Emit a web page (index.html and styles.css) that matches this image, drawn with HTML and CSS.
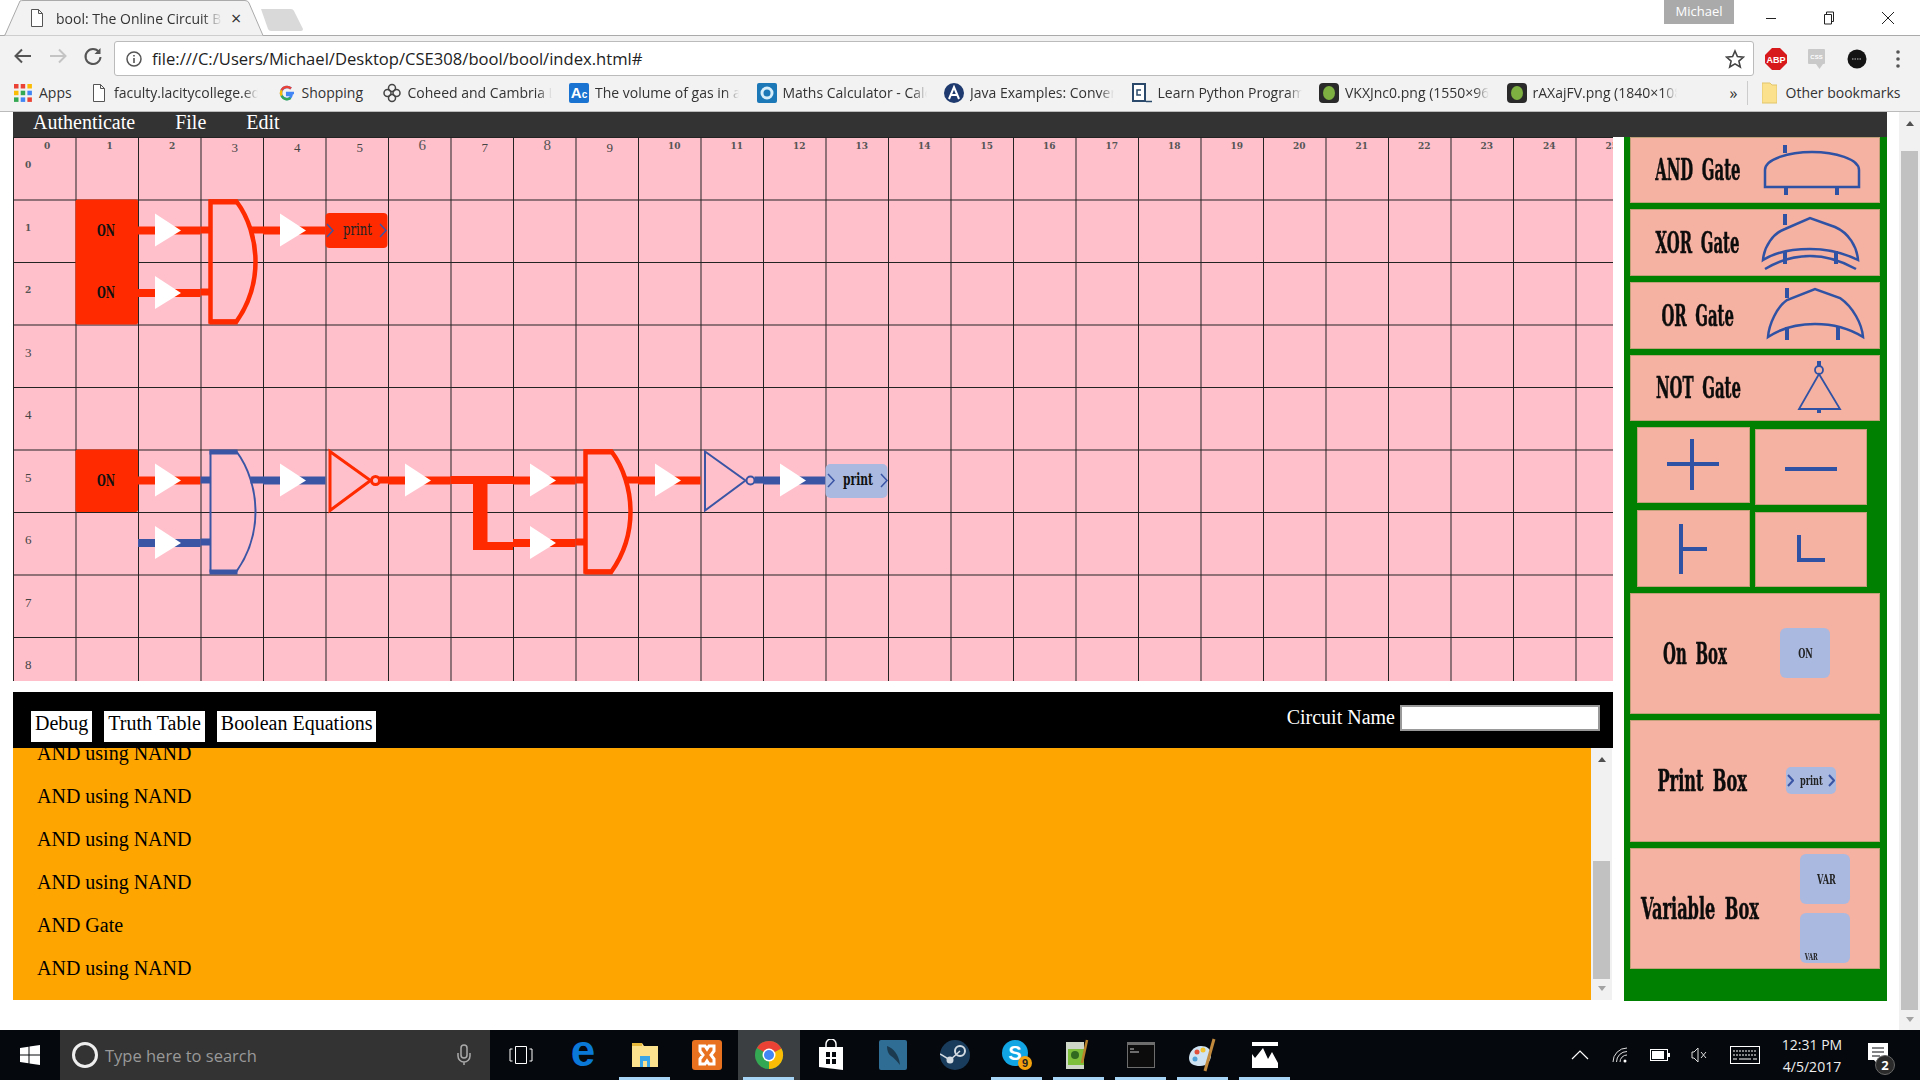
FILE: index.html
```html
<!DOCTYPE html>
<html lang="en">
<head>
<meta charset="utf-8">
<title>bool: The Online Circuit Builder</title>
<link rel="stylesheet" href="styles.css">
</head>
<body>
<header class="chrome">
  <div class="tabstrip">
    <div class="tab">
      <svg class="tab-shape" width="262" height="36" viewBox="0 0 262 36"><path d="M0,35.5 L1,35 L16,1 Q17,0.5 20,0.5 H241 Q244,0.5 245,3 L259,35.5" fill="#f2f2f2" stroke="#aaa"/></svg>
      <svg class="tab-doc" width="12" height="18" viewBox="0 0 12 18"><path d="M0.5,0.5 H7.5 L11.5,4.5 V17.5 H0.5 Z M7.5,0.5 V4.5 H11.5" fill="#fff" stroke="#555"/></svg>
      <span class="tab-title">bool: The Online Circuit Builder</span>
      <span class="tab-close">×</span>
    </div>
    <svg class="newtab" width="44" height="22" viewBox="0 0 44 22"><path d="M1,0 H31 Q33,0 34,2 L43,20 Q43,22 41,22 H11 Q9,22 8,20 Z" fill="#d9d9d9"/></svg>
    <div class="profile">Michael</div>
    <div class="winctl">
      <svg width="12" height="12" viewBox="0 0 12 12"><path d="M1,6.5 H11" stroke="#222" fill="none"/></svg>
      <svg width="12" height="14" viewBox="0 0 12 14"><path d="M1.5,3.5 H8.5 V13 H1.5 Z M3.5,3.5 V1 H10.5 V10.5 H8.5" stroke="#222" fill="none"/></svg>
      <svg width="14" height="14" viewBox="0 0 14 14"><path d="M1,1 L13,13 M13,1 L1,13" stroke="#222" fill="none"/></svg>
    </div>
  </div>
  <div class="toolbar">
    <svg class="nav" width="20" height="20" viewBox="0 0 20 20"><path d="M18,10 H3 M9,3.5 L2.5,10 L9,16.5" stroke="#555" stroke-width="2" fill="none"/></svg>
    <svg class="nav" width="20" height="20" viewBox="0 0 20 20"><path d="M2,10 H17 M11,3.5 L17.5,10 L11,16.5" stroke="#c4c4c4" stroke-width="2" fill="none"/></svg>
    <svg class="nav" width="20" height="20" viewBox="0 0 20 20"><path d="M16,6 A7.5,7.5 0 1 0 17.5,11" stroke="#555" stroke-width="2" fill="none"/><path d="M17.5,2 V8 H11.5 Z" fill="#555"/></svg>
    <div class="omnibox">
      <svg width="16" height="16" viewBox="0 0 16 16"><circle cx="8" cy="8" r="7" fill="none" stroke="#555" stroke-width="1.5"/><path d="M8,7 V12 M8,4 V5.6" stroke="#555" stroke-width="1.6"/></svg>
      <span class="url">file:///C:/Users/Michael/Desktop/CSE308/bool/bool/index.html#</span>
      <svg class="star" width="20" height="20" viewBox="0 0 20 20"><path d="M10,2 L12.4,7.6 L18.5,8.1 L13.9,12.1 L15.3,18 L10,14.9 L4.7,18 L6.1,12.1 L1.5,8.1 L7.6,7.6 Z" fill="none" stroke="#444" stroke-width="1.6"/></svg>
    </div>
    <div class="exts">
      <svg width="22" height="22" viewBox="0 0 22 22"><polygon points="7,0 15,0 22,7 22,15 15,22 7,22 0,15 0,7" fill="#d8191c"/><text x="11" y="14.5" class="abp">ABP</text></svg>
      <svg width="20" height="22" viewBox="0 0 20 22"><rect x="1" y="1" width="17" height="15" rx="1" fill="#c9c9c9"/><path d="M9,16 H16 L12.500,21 Z" fill="#c9c9c9"/><text x="9.500" y="11" class="cssx">CSS</text></svg>
      <svg width="20" height="20" viewBox="0 0 20 20"><circle cx="10" cy="10" r="9.500" fill="#141414"/><path d="M5,10 H15" stroke="#888" stroke-width="1.500" stroke-dasharray="1.500 1"/></svg>
      <svg class="dots" width="4" height="18" viewBox="0 0 4 18"><circle cx="2" cy="2" r="1.800" fill="#555"/><circle cx="2" cy="9" r="1.800" fill="#555"/><circle cx="2" cy="16" r="1.800" fill="#555"/></svg>
    </div>
  </div>
  <nav class="bookmarks">
    <a class="bm bm-apps"><svg width="18" height="18" viewBox="0 0 18 18"><rect width="4.500" height="4.500" fill="#ea4335"/><rect x="6.700" width="4.500" height="4.500" fill="#ea4335"/><rect x="13.400" width="4.500" height="4.500" fill="#fbbc05"/><rect y="6.700" width="4.500" height="4.500" fill="#fbbc05"/><rect x="6.700" y="6.700" width="4.500" height="4.500" fill="#34a853"/><rect x="13.400" y="6.700" width="4.500" height="4.500" fill="#4285f4"/><rect y="13.400" width="4.500" height="4.500" fill="#34a853"/><rect x="6.700" y="13.400" width="4.500" height="4.500" fill="#4285f4"/><rect x="13.400" y="13.400" width="4.500" height="4.500" fill="#ea4335"/></svg><span>Apps</span></a>
    <a class="bm"><svg class="w18" width="18" height="18" viewBox="0 0 12 18"><path d="M0.500,0.500 H7.500 L11.500,4.500 V17.500 H0.500 Z M7.500,0.500 V4.500 H11.500" fill="#fff" stroke="#555"/></svg><span class="fade">faculty.lacitycollege.edu</span></a>
    <a class="bm bm-short"><svg width="18" height="18" viewBox="0 0 18 18"><path d="M16,9 H9.200 V11 H13.500 C13,13.500 11.300,15 9,15 A6,6 0 1 1 13,4.500" fill="none" stroke="#4285f4" stroke-width="2.500"/><path d="M13,4.500 A6,6 0 0 0 3.600,6.300" fill="none" stroke="#ea4335" stroke-width="2.500"/><path d="M3.600,6.300 A6,6 0 0 0 3.600,11.700" fill="none" stroke="#fbbc05" stroke-width="2.500"/><path d="M3.600,11.700 A6,6 0 0 0 12.500,14" fill="none" stroke="#34a853" stroke-width="2.500"/></svg><span>Shopping</span></a>
    <a class="bm"><svg width="20" height="20" viewBox="0 0 18 20"><g fill="none" stroke="#444" stroke-width="1.500"><circle cx="9" cy="5" r="3.500"/><circle cx="4.500" cy="10" r="3.500"/><circle cx="13.500" cy="10" r="3.500"/><circle cx="9" cy="15" r="3.500"/></g></svg><span class="fade">Coheed and Cambria Lyrics</span></a>
    <a class="bm"><span class="fav fav-ac">A<small>c</small></span><span class="fade">The volume of gas in a container</span></a>
    <a class="bm"><svg width="20" height="20" viewBox="0 0 20 20"><rect width="20" height="20" rx="2" fill="#1d78b8"/><circle cx="10" cy="10" r="6.500" fill="#d6eef9"/><circle cx="10" cy="10" r="3.500" fill="#1d78b8"/></svg><span class="fade">Maths Calculator - Calculate</span></a>
    <a class="bm"><svg width="20" height="20" viewBox="0 0 20 20"><circle cx="10" cy="10" r="10" fill="#1e3a6e"/><path d="M5,16 L10,4 L15,16 M7,12 H13" stroke="#fff" stroke-width="2" fill="none"/></svg><span class="fade">Java Examples: Conversions</span></a>
    <a class="bm"><svg width="20" height="20" viewBox="0 0 20 20"><rect x="1" y="1" width="12" height="17" fill="#fff" stroke="#2b4a6b" stroke-width="2"/><path d="M9,7 H5 V12 H9" stroke="#2b4a6b" stroke-width="1.500" fill="none"/><path d="M14,18.500 H20" stroke="#2b4a6b" stroke-width="1.500"/></svg><span class="fade">Learn Python Programming</span></a>
    <a class="bm"><svg width="20" height="20" viewBox="0 0 20 20"><rect width="20" height="20" rx="4" fill="#2a2a2a"/><ellipse cx="10" cy="10" rx="6" ry="7" fill="#7db040"/></svg><span class="fade">VKXJnc0.png (1550×960)</span></a>
    <a class="bm bm-last"><svg width="20" height="20" viewBox="0 0 20 20"><rect width="20" height="20" rx="4" fill="#2a2a2a"/><ellipse cx="10" cy="10" rx="6" ry="7" fill="#7db040"/></svg><span class="fade">rAXajFV.png (1840×1080)</span></a>
    <span class="bm-more">»</span>
    <a class="bm-other"><svg width="15" height="22" viewBox="0 0 15 22"><path d="M0,1 H8 L10,3 H15 V21 H0 Z" fill="#fbe08e" stroke="#e3c56a"/></svg><span>Other bookmarks</span></a>
  </nav>
</header>

<main class="page">
  <div class="content">
    <div class="menu">
      <a>Authenticate</a><a>File</a><a>Edit</a>
    </div>
    <div class="main">
      <section class="left">
        <div class="board">
          <span class="cl">0</span><span class="cl">1</span><span class="cl">2</span><span class="cl lg">3</span><span class="cl lg">4</span><span class="cl lg">5</span><span class="cl huge">6</span><span class="cl lg">7</span><span class="cl huge">8</span><span class="cl lg">9</span><span class="cl">10</span><span class="cl">11</span><span class="cl">12</span><span class="cl">13</span><span class="cl">14</span><span class="cl">15</span><span class="cl">16</span><span class="cl">17</span><span class="cl">18</span><span class="cl">19</span><span class="cl">20</span><span class="cl">21</span><span class="cl">22</span><span class="cl">23</span><span class="cl">24</span><span class="cl">25</span>
          <span class="rl rl-first">0</span><span class="rl">1</span><span class="rl">2</span><span class="rl lg">3</span><span class="rl lg">4</span><span class="rl lg">5</span><span class="rl lg">6</span><span class="rl lg">7</span><span class="rl lg">8</span>
          <svg class="circuit" width="1600" height="544" viewBox="0 0 1600 544">
            <defs>
              <g id="arrow"><rect x="0" y="27" width="62.500" height="8" fill="currentColor"/><polygon points="17,14 43,31 17,47" fill="#fff"/></g>
              <g id="gate"><path d="M10,2 H36 C48,18 55,40 55,62 C55,85 48,105 36,122 H10 Z" fill="none" stroke="currentColor"/><rect x="9" y="0" width="28" height="5" fill="currentColor"/><rect x="9" y="120" width="28" height="5" fill="currentColor"/><rect x="0" y="27" width="10" height="7" fill="currentColor"/><rect x="0" y="89" width="10" height="7" fill="currentColor"/><rect x="50" y="27" width="13" height="7" fill="currentColor"/></g>
              <g id="not"><polygon points="4.500,2 45,31 4.500,61" fill="none" stroke="currentColor"/><circle cx="50" cy="31" r="4" fill="none" stroke="currentColor"/><rect x="54" y="27" width="9" height="7" fill="currentColor"/></g>
              <path id="chev" d="M0,0 L6,6.500 L0,13" fill="none" stroke="#3b55a5" stroke-width="1.500"/>
            </defs>
            <g class="red">
              <rect class="on" x="62.500" y="62.500" width="62.500" height="125" rx="2"/>
              <use href="#arrow" x="125" y="62.500"/>
              <use href="#arrow" x="125" y="125"/>
              <use href="#gate" class="thick" x="187.500" y="62.500"/>
              <use href="#arrow" x="250" y="62.500"/>
              <rect class="on" x="312.500" y="76" width="62" height="35" rx="4"/>
              <rect class="on" x="62.500" y="312.500" width="62.500" height="62.500" rx="2"/>
              <use href="#arrow" x="125" y="312.500"/>
              <use href="#not" class="mid" x="312.500" y="312.500"/>
              <use href="#arrow" x="375" y="312.500"/>
              <path d="M437.500,343 H500 M464,343 V409 H500" fill="none" stroke="currentColor" stroke-width="8"/>
              <path d="M469,343 V408" fill="none" stroke="currentColor" stroke-width="11"/>
              <use href="#arrow" x="500" y="312.500"/>
              <use href="#arrow" x="500" y="375"/>
              <use href="#gate" class="thick" x="562.500" y="312.500"/>
              <use href="#arrow" x="625" y="312.500"/>
            </g>
            <g class="blue">
              <use href="#arrow" x="125" y="375"/>
              <use href="#gate" class="thin" x="187.500" y="312.500"/>
              <use href="#arrow" x="250" y="312.500"/>
              <use href="#not" class="thin" x="687.500" y="312.500"/>
              <use href="#arrow" x="750" y="312.500"/>
              <rect class="vbox" x="812.500" y="327" width="62" height="34" rx="5"/>
            </g>
            <use href="#chev" x="314" y="87"/>
            <use href="#chev" x="367" y="87"/>
            <text class="cell-text" x="330" y="98" textLength="29" lengthAdjust="spacingAndGlyphs">print</text>
            <text class="cell-text on-text" x="84" y="99" textLength="18" lengthAdjust="spacingAndGlyphs">ON</text>
            <text class="cell-text on-text" x="84" y="161" textLength="18" lengthAdjust="spacingAndGlyphs">ON</text>
            <text class="cell-text on-text" x="84" y="349" textLength="18" lengthAdjust="spacingAndGlyphs">ON</text>
            <use href="#chev" x="815" y="337"/>
            <use href="#chev" x="868" y="337"/>
            <text class="cell-text strong" x="830" y="348" textLength="30" lengthAdjust="spacingAndGlyphs">print</text>
          </svg>
        </div>
        <div class="bar">
          <button class="bar-tab">Debug</button>
          <button class="bar-tab">Truth Table</button>
          <button class="bar-tab">Boolean Equations</button>
          <label class="name-field">Circuit Name <input type="text" class="name-input"></label>
        </div>
        <div class="debug">
          <div class="debug-log">
            <div class="log-lines">
              <p>AND using NAND</p>
              <p>AND using NAND</p>
              <p>AND using NAND</p>
              <p>AND using NAND</p>
              <p>AND Gate</p>
              <p>AND using NAND</p>
            </div>
          </div>
          <div class="inner-scroll">
            <span class="arrow-up"></span>
            <span class="inner-thumb"></span>
            <span class="arrow-down"></span>
          </div>
        </div>
      </section>

      <aside class="palette">
        <div class="card h66">
          <span class="lbl"><b>AND Gate</b></span>
          <svg class="ico" width="114" height="66" viewBox="0 0 114 66"><path class="ln" d="M0,50 H94 V33 C94,22 70,15 47,15 C24,15 0,22 0,33 Z"/><path class="st" d="M20,8 V16 M21,50 V58 M72,50 V58"/></svg>
        </div>
        <div class="card h67">
          <span class="lbl"><b>XOR Gate</b></span>
          <svg class="ico" width="114" height="67" viewBox="0 0 114 67"><path class="ln" d="M-2,51 C-1,38 8,24 20,20 L45,9 L70,18 C84,24 92,38 93,51 C75,42 60,40 45,40 C30,40 12,42 -2,51 Z"/><path class="ln" d="M0,60 C15,51 30,47 45,47 C60,47 75,51 91,60"/><path class="st" d="M20,5 V16 M20,42 V55 M71,42 V55"/></svg>
        </div>
        <div class="card h67">
          <span class="lbl"><b>OR Gate</b></span>
          <svg class="ico" width="114" height="67" viewBox="0 0 114 67"><path class="ln" d="M3,55 C4,42 12,25 22,18 L50,7 L75,16 C88,25 97,42 98,55 C82,45 65,42 50,42 C35,42 18,45 3,55 Z"/><path class="st" d="M22,6 V16 M22,45 V58 M73,45 V58"/></svg>
        </div>
        <div class="card h66">
          <span class="lbl"><b>NOT Gate</b></span>
          <svg class="ico" width="114" height="66" viewBox="0 0 114 66"><path class="ln fine" d="M54,19 L75,54 H34 Z"/><circle class="ln fine" cx="54" cy="15" r="4"/><path class="st" d="M54,6 V11 M54,54 V58"/></svg>
        </div>
        <div class="wires">
          <div class="wire-col">
            <div class="wire h76"><svg width="60" height="60" viewBox="0 0 60 60"><path class="st" d="M4,29 H56 M29,4 V55"/></svg></div>
            <div class="wire h77"><svg width="60" height="60" viewBox="0 0 60 60"><path class="st" d="M18,5 V55 M18,30 H44"/></svg></div>
          </div>
          <div class="wire-col shifted">
            <div class="wire h76"><svg width="60" height="60" viewBox="0 0 60 60"><path class="st" d="M4,32 H56"/></svg></div>
            <div class="wire h75"><svg width="60" height="60" viewBox="0 0 60 60"><path class="st" d="M18,15 V40 H44"/></svg></div>
          </div>
        </div>
        <div class="card tall">
          <span class="lbl lbl-on"><b>On Box</b></span>
          <span class="chip chip-on"><span class="chip-t">ON</span></span>
        </div>
        <div class="card tall taller">
          <span class="lbl lbl-print"><b class="wide">Print Box</b></span>
          <span class="chip-print">
            <svg width="7" height="13" viewBox="0 0 7 13"><path d="M1,1 L6,6.500 L1,12" fill="none" stroke="#3b55a5" stroke-width="2"/></svg>
            <span class="chip-t">print</span>
            <svg width="7" height="13" viewBox="0 0 7 13"><path d="M1,1 L6,6.500 L1,12" fill="none" stroke="#3b55a5" stroke-width="2"/></svg>
          </span>
        </div>
        <div class="card tall">
          <span class="lbl lbl-var"><b class="wide">Variable Box</b></span>
          <span class="var-col">
            <span class="chip chip-var"><span class="chip-t">VAR</span></span>
            <span class="chip chip-var2"><span class="chip-t small">VAR</span></span>
          </span>
        </div>
      </aside>
    </div>
  </div>
  <div class="page-scroll">
    <span class="arrow-up"></span>
    <span class="page-thumb"></span>
    <span class="arrow-down"></span>
  </div>
</main>

<footer class="taskbar">
  <div class="start"><svg width="20" height="20" viewBox="0 0 20 20"><path d="M0,3 L8.500,1.700 V9.500 H0 Z M9.500,1.500 L20,0 V9.500 H9.500 Z M0,10.500 H8.500 V18.300 L0,17 Z M9.500,10.500 H20 V20 L9.500,18.500 Z" fill="#fff"/></svg></div>
  <div class="search">
    <svg width="28" height="28" viewBox="0 0 28 28"><circle cx="14" cy="14" r="11.500" fill="none" stroke="#eee" stroke-width="3"/></svg>
    <span class="search-text">Type here to search</span>
    <svg class="mic" width="16" height="22" viewBox="0 0 16 22"><rect x="5" y="1" width="6" height="13" rx="3" fill="none" stroke="#aaa" stroke-width="1.500"/><path d="M2,9 V12 A6,6 0 0 0 14,12 V9 M8,18 V21" fill="none" stroke="#aaa" stroke-width="1.500"/></svg>
  </div>
  <div class="slot"><svg width="24" height="20" viewBox="0 0 24 20"><path d="M6.500,1.500 H17.500 V18.500 H6.500 Z M3.500,4 H1 V16 H3.500 M20.500,4 H23 V16 H20.500" fill="none" stroke="#fff"/></svg></div>
  <div class="slot"><span class="edge">e</span></div>
  <div class="slot open"><svg width="28" height="26" viewBox="0 0 28 26"><path d="M1,1 H11 L13,4 H27 V25 H1 Z" fill="#fbe08e"/><path d="M1,1 H11 V4 H1 Z" fill="#e6b93d"/><path d="M9,14 H19 V25 H16 V19 H12 V25 H9 Z" fill="#3aa6e8"/></svg></div>
  <div class="slot"><svg width="30" height="30" viewBox="0 0 30 30"><rect width="30" height="30" rx="3" fill="#e8711f"/><path d="M8,6 H13 L15,9 L17,6 H22 V11 L19,15 L22,19 V24 H17 L15,21 L13,24 H8 V19 L11,15 L8,11 Z" fill="none" stroke="#fff" stroke-width="3"/></svg></div>
  <div class="slot open active"><svg width="30" height="30" viewBox="0 0 30 30"><circle cx="15" cy="15" r="14" fill="#34a853"/><path d="M15,15 L3,8 A14,14 0 0 1 27.500,8.500 Z" fill="#ea4335"/><path d="M15,15 L27.500,8.500 A14,14 0 0 1 15,29 Z" fill="#fbbc05"/><circle cx="15" cy="15" r="6.500" fill="#fff"/><circle cx="15" cy="15" r="5" fill="#4285f4"/></svg></div>
  <div class="slot"><svg width="26" height="32" viewBox="0 0 26 32"><path d="M1,8 H25 V31 L1,28 Z" fill="#fff"/><path d="M8,8 V5 A5,5 0 0 1 18,5 V8" fill="none" stroke="#fff" stroke-width="1.500"/><path d="M8,13 H12 V18 H8 Z M14,13 H18 V18 H14 Z M8,20 H12 V25 H8 Z M14,20 H18 V25 H14 Z" fill="#05080d"/></svg></div>
  <div class="slot"><svg width="28" height="30" viewBox="0 0 28 30"><rect width="28" height="30" rx="2" fill="#2f6d94"/><path d="M8,6 C14,8 20,14 21,25 C17,20 15,18 12,16 C9,14 8,10 8,6 Z" fill="#1b3a50"/></svg></div>
  <div class="slot"><svg width="30" height="30" viewBox="0 0 30 30"><circle cx="15" cy="15" r="15" fill="#1a3c5c"/><circle cx="20" cy="11" r="5" fill="none" stroke="#d3dbe2" stroke-width="2"/><circle cx="10" cy="20" r="3.500" fill="#d3dbe2"/><path d="M0,14 L10,20 L20,11" fill="none" stroke="#d3dbe2" stroke-width="1.500"/></svg></div>
  <div class="slot open"><svg width="32" height="32" viewBox="0 0 32 32"><circle cx="14" cy="14" r="13" fill="#12a5e4"/><text x="14" y="21" class="skype">S</text><circle cx="24" cy="24" r="7" fill="#f4a10e"/><text x="24" y="28" class="skype-n">9</text></svg></div>
  <div class="slot open"><svg width="30" height="32" viewBox="0 0 30 32"><path d="M2,3 H20 V30 H2 Z" fill="#cfd8c8"/><rect x="4" y="10" width="16" height="16" fill="#7dbf3a"/><circle cx="11" cy="16" r="4" fill="#2f6a20"/><path d="M23,1 L18,24" stroke="#b8832a" stroke-width="2.500"/></svg></div>
  <div class="slot open"><svg width="28" height="26" viewBox="0 0 28 26"><rect width="28" height="26" fill="#6d6d6d"/><rect x="1" y="3" width="26" height="22" fill="#0c0c0c"/><path d="M3,7 H7 M3,10 H12" stroke="#ccc"/></svg></div>
  <div class="slot open"><svg width="30" height="34" viewBox="0 0 30 34"><path d="M13,8 C5,8 1,15 1,20 C1,26 6,28 12,28 C19,28 23,23 23,17 C23,11 19,8 13,8 Z" fill="#cfe3f2"/><circle cx="9" cy="14" r="2.500" fill="#e04f3c"/><circle cx="15" cy="12" r="2.500" fill="#f4c430"/><circle cx="7" cy="21" r="2.500" fill="#4f9fd8"/><path d="M26,1 L17,33" stroke="#c28a3c" stroke-width="3"/></svg></div>
  <div class="slot open"><svg width="26" height="26" viewBox="0 0 26 26"><rect width="26" height="26" fill="#fff"/><path d="M0,4 H26 V21 L20,10 L16,17 L11,6 L3,16 L0,12 Z" fill="#05080d"/><rect width="26" height="2" fill="#fff"/></svg></div>
  <div class="tray">
    <svg class="t-caret" width="18" height="10" viewBox="0 0 18 10"><path d="M1,9 L9,1 L17,9" fill="none" stroke="#fff" stroke-width="1.200"/></svg>
    <svg class="t-wifi" width="16" height="16" viewBox="0 0 16 16"><path d="M1,15 A14,14 0 0 1 15,1 M4.500,15 A10.500,10.500 0 0 1 15,4.500 M8,15 A7,7 0 0 1 15,8" fill="none" stroke="#ddd"/><circle cx="13" cy="14" r="1.500" fill="#fff"/></svg>
    <svg class="t-batt" width="20" height="12" viewBox="0 0 20 12"><rect x="0.500" y="0.500" width="17" height="11" fill="#05080d" stroke="#fff"/><rect x="2" y="2" width="12" height="8" fill="#fff"/><rect x="18" y="4" width="2" height="4" fill="#fff"/></svg>
    <svg class="t-sound" width="16" height="16" viewBox="0 0 16 16"><path d="M1,5 H3 L7,1 V15 L3,11 H1 Z M10,5 L15,11 M15,5 L10,11" fill="none" stroke="#ddd"/></svg>
    <svg class="t-kbd" width="30" height="18" viewBox="0 0 30 18"><rect x="0.500" y="0.500" width="29" height="17" fill="none" stroke="#fff"/><path d="M3,5 H27 M3,9 H27" stroke="#fff" stroke-dasharray="2 1"/><path d="M3,13 H7 M9,13 H21 M23,13 H27" stroke="#fff"/></svg>
    <div class="clock"><span>12:31 PM</span><span>4/5/2017</span></div>
    <div class="notif">
      <svg width="20" height="24" viewBox="0 0 20 24"><path d="M0,0 H20 V17 H12 V24 L6,17 H0 Z" fill="#fff"/><path d="M4,5 H16 M4,9 H16 M4,13 H12" stroke="#05080d"/></svg>
      <span class="notif-badge">2</span>
    </div>
  </div>
</footer>
</body>
</html>
```

FILE: styles.css
```css
* { box-sizing: border-box; }
html, body { margin: 0; padding: 0; }
body {
  width: 1920px;
  height: 1080px;
  overflow: hidden;
  display: flex;
  flex-direction: column;
  background: #fff;
  font-family: "Liberation Serif", serif;
}

/* browser chrome */
.chrome { height: 112px; flex: none; font-family: "Open Sans", sans-serif; color: #333; }
.tabstrip { height: 36px; display: flex; align-items: flex-start; border-bottom: 1px solid #aaa; position: relative; }
.tab { position: relative; width: 262px; height: 36px; margin-left: 4px; display: flex; align-items: center; padding-left: 27px; flex: none; }
.tab-shape { position: absolute; left: 0; top: 0; }
.tab-doc { position: relative; flex: none; }
.tab-title {
  position: relative; margin-left: 13px; width: 166px; white-space: nowrap; overflow: hidden;
  font-size: 14px;
  mask-image: linear-gradient(to right, #000 88%, transparent);
}
.tab-close { position: relative; margin-left: 9px; font-size: 18px; line-height: 18px; color: #333; }
.newtab { margin-left: -6px; margin-top: 9px; flex: none; }
.profile { margin-left: auto; width: 70px; height: 24px; background: #aaa; color: #fff; font-size: 13px; text-align: center; line-height: 22px; margin-right: 31px; }
.winctl { width: 155px; display: flex; justify-content: space-between; align-items: center; height: 36px; padding-right: 25px; }
.toolbar { height: 40px; background: #f2f2f2; display: flex; align-items: center; padding-left: 13px; }
.nav { margin-right: 15px; flex: none; }
.omnibox {
  width: 1640px; height: 35px; margin-left: -4px; margin-top: 5px;
  background: #fff; border: 1px solid #bbb; border-radius: 3px;
  display: flex; align-items: center; padding-left: 11px; padding-right: 8px; flex: none;
}
.url { font-size: 16.6px; margin-left: 10px; color: #222; white-space: nowrap; }
.star { margin-left: auto; }
.exts { flex: 1; display: flex; align-items: center; padding-left: 11px; gap: 20px; margin-top: 5px; }
.dots { margin-left: 9px; }
.abp { font: 700 9px "Liberation Sans", sans-serif; fill: #fff; text-anchor: middle; }
.cssx { font: 700 6px "Liberation Sans", sans-serif; fill: #fff; text-anchor: middle; }
.bookmarks {
  height: 36px; background: #f2f2f2; border-bottom: 1px solid #bbb;
  display: flex; align-items: center; padding: 0 0 2px 14px; font-size: 14px;
}
.bm { display: flex; align-items: center; gap: 6px; width: 187.5px; flex: none; overflow: hidden; white-space: nowrap; }
.bm-apps { width: 76px; gap: 7px; }
.bm-short { width: 104px; }
.bm-last { width: 190px; }
.fade { width: 144px; overflow: hidden; mask-image: linear-gradient(to right, #000 90%, transparent); }
.fav { width: 20px; height: 20px; flex: none; }
.fav-ac { background: #1a73d1; color: #fff; font: 700 15px/20px "Liberation Sans", sans-serif; text-align: center; border-radius: 2px; }
.fav-ac small { font-size: 10px; }
.bm-more { margin-left: 33px; font-size: 16px; width: 17px; }
.bm-other { display: flex; align-items: center; gap: 9px; border-left: 1px solid #ccc; padding-left: 14px; height: 24px; white-space: nowrap; }

/* page */
.page { height: 918px; flex: none; display: flex; padding-left: 13px; }
.content { width: 1874px; flex: none; }
.menu { height: 25px; background: #333; color: #fff; font-size: 20px; line-height: 20px; padding-left: 20px; display: flex; gap: 40px; }
.main { display: flex; gap: 11px; height: 864px; }
.left { width: 1600px; flex: none; }

.board {
  position: relative; width: 1600px; height: 544px; overflow: hidden;
  display: grid; grid-template-columns: repeat(26, 62.5px); grid-template-rows: repeat(9, 62.5px);
  background-color: #ffc0cb;
  background-image: linear-gradient(to right, #222 1px, transparent 1px), linear-gradient(to bottom, #222 1px, transparent 1px);
  background-size: 62.5px 62.5px;
}
.cl, .rl { font: 700 9px "DejaVu Serif", serif; color: #555; line-height: 12px; }
.cl { grid-row: 1; justify-self: center; align-self: start; padding: 3px 0 0 6px; }
.cl:first-child { grid-column: 1; }
.cl:nth-child(n+11) { padding-left: 10px; }
.rl { grid-column: 1; justify-self: start; align-self: center; padding: 0 0 6px 12px; }
.rl-first { grid-row: 1; }
.cl.lg, .rl.lg { font: 400 13px "Liberation Serif", serif; color: #444; }
.cl.huge { font: 400 15px "Liberation Serif", serif; color: #555; padding-top: 0; }
.circuit { position: absolute; left: 0; top: 0; }
.red { color: #ff2a00; }
.blue { color: #3b55a5; }
.on { fill: #ff2a00; }
.vbox { fill: #aab9e0; }
.thick { stroke-width: 4.5; }
.mid { stroke-width: 3; }
.thin { stroke-width: 2; }
.cell-text { font: 400 17px "DejaVu Serif", serif; font-stretch: condensed; fill: #222; }
.on-text { font-weight: 700; font-size: 17px; fill: #111; }
.strong { font-weight: 700; fill: #111; }

.bar { margin-top: 11px; height: 56px; background: #000; display: flex; align-items: flex-start; padding: 19px 13px 0 18px; }
.bar-tab { font: 400 20px "Liberation Serif", serif; height: 31px; padding: 0 4px 6px; border: 0; background: #fff; color: #000; margin-right: 12px; }
.name-field { margin-left: auto; margin-top: -7px; color: #fff; font-size: 20px; display: flex; align-items: center; gap: 5px; }
.name-input { width: 200px; height: 26px; border: 2px solid #999; background: #fff; margin-top: 1px; }

.debug { height: 252px; display: flex; }
.debug-log { width: 1578px; flex: none; background: #ffa500; overflow: hidden; padding-left: 24px; font-size: 20px; }
.log-lines { margin-top: -6px; }
.log-lines p { margin: 20px 0 0; line-height: 23px; }
.log-lines p:first-child { margin-top: 0; }
.inner-scroll { width: 21px; background: #f1f1f1; display: flex; flex-direction: column; align-items: center; padding-top: 9px; }
.inner-thumb { width: 17px; height: 118px; background: #c1c1c1; margin-top: 99px; }
.arrow-up, .arrow-down { width: 0; height: 0; border-left: 4.500px solid transparent; border-right: 4.500px solid transparent; flex: none; }
.arrow-up { border-bottom: 5px solid #505050; }
.arrow-down { border-top: 5px solid #a3a3a3; margin-top: 7px; }

/* palette */
.palette { width: 263px; height: 864px; flex: none; background: #008000; padding-left: 6px; display: flex; flex-direction: column; gap: 6px; }
.card { width: 250px; flex: none; background: #f5b1a2; border: 1px solid #bfa078; display: flex; align-items: center; }
.h66 { height: 66px; }
.h67 { height: 67px; }
.tall { height: 121px; }
.taller { height: 122px; }
.lbl { width: 134px; flex: none; display: flex; justify-content: center; }
.lbl b {
  white-space: nowrap; font: 700 29px "DejaVu Serif", serif; font-stretch: condensed; color: #0c0c0c;
  transform: scaleX(0.57); word-spacing: 6px; -webkit-text-stroke: 0.5px #0c0c0c;
}
.lbl b.wide { transform: scaleX(0.62); }
.ico { overflow: visible; flex: none; }
.ln { fill: none; stroke: #2f52a5; stroke-width: 2.500; }
.ln.fine { stroke-width: 1.800; }
.st { fill: none; stroke: #2f52a5; stroke-width: 4; }
.wires { display: flex; gap: 5px; padding-left: 7px; height: 160px; flex: none; }
.wire-col { width: 112.500px; display: flex; flex-direction: column; gap: 7px; }
.shifted { margin-top: 2px; }
.wire { background: #f5b1a2; border: 1px solid #bfa078; display: flex; align-items: center; justify-content: center; flex: none; }
.h75 { height: 75px; }
.h76 { height: 76px; }
.h77 { height: 77px; }
.lbl-on { margin-right: 21px; width: 128px; }
.lbl-print { width: 142px; margin-right: 2px; }
.lbl-var { width: 137px; margin-right: 32px; }
.chip { width: 50px; height: 50px; border-radius: 6px; background: #aab9e0; display: flex; align-items: center; justify-content: center; flex: none; }
.chip-on { margin-top: -1px; }
.chip-t { font: 700 13px "DejaVu Serif", serif; font-stretch: condensed; color: #222; transform: scaleX(0.7); }
.chip-print { width: 50px; height: 27px; border-radius: 5px; background: #aab9e0; display: flex; align-items: center; justify-content: space-between; padding: 0 1px; margin: -2px 0 0 11px; }
.var-col { display: flex; flex-direction: column; gap: 9px; }
.chip-var { padding-left: 3px; }
.chip-var2 { align-items: flex-end; justify-content: flex-start; padding: 0 0 1px 2px; }
.chip-t.small { font-size: 9px; }

/* page scrollbar */
.page-scroll { width: 21px; flex: none; margin-left: 12px; background: #f1f1f1; display: flex; flex-direction: column; align-items: center; padding-top: 9px; }
.page-thumb { width: 17px; height: 859px; background: #c1c1c1; margin-top: 25px; }

/* taskbar */
.taskbar { height: 50px; flex: none; background: #05080d; display: flex; align-items: center; color: #fff; }
.start { width: 60px; height: 50px; display: flex; align-items: center; justify-content: center; }
.search { width: 430px; height: 50px; background: #333; display: flex; align-items: center; padding-left: 11px; }
.search-text { font: 400 16.5px "Open Sans", sans-serif; color: #999; margin-left: 6px; }
.mic { margin-left: auto; margin-right: 18px; }
.slot { width: 62px; height: 50px; display: flex; align-items: center; justify-content: center; flex: none; position: relative; }
.slot.open::after { content: ""; position: absolute; left: 5px; right: 6px; bottom: 0; height: 3px; background: #a6d4f5; }
.slot.active { background: #3c3f42; }
.edge { font: 700 44px/44px "Liberation Sans", sans-serif; color: #0a78d7; margin-top: -8px; }
.skype { font: 700 20px "Liberation Sans", sans-serif; fill: #fff; text-anchor: middle; }
.skype-n { font: 700 11px "Liberation Sans", sans-serif; fill: #222; text-anchor: middle; }
.tray { flex: 1; display: flex; align-items: center; height: 50px; }
.t-caret { margin-left: 275px; }
.t-wifi { margin-left: 23px; }
.t-batt { margin-left: 22px; }
.t-sound { margin-left: 21px; }
.t-kbd { margin-left: 23px; }
.clock { width: 74px; margin-left: 15px; display: flex; flex-direction: column; align-items: center; gap: 3px; font: 400 14px "Open Sans", sans-serif; color: #eee; line-height: 19px; }
.notif { margin-left: 19px; position: relative; height: 24px; }
.notif-badge { position: absolute; left: 7px; top: 12px; width: 20px; height: 20px; border-radius: 50%; background: #2b2b2b; border: 1px solid #666; text-align: center; font: 700 13px/18px "Open Sans", sans-serif; color: #fff; }
```
